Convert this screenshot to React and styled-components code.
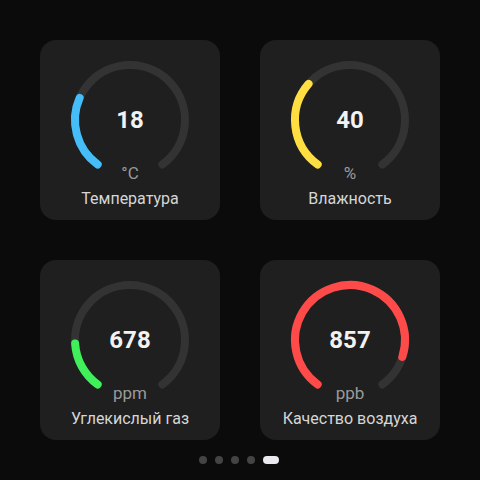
import React from "react";
import styled, { createGlobalStyle } from "styled-components";

const Global = createGlobalStyle`
  html, body { margin: 0; padding: 0; background: #0b0b0b; }
  body { width: 480px; height: 480px; overflow: hidden; font-family: Roboto, "Noto Sans", sans-serif; }
`;

const Page = styled.div`
  width: 480px;
  height: 480px;
  box-sizing: border-box;
  padding-top: 40px;
  display: flex;
  flex-direction: column;
  align-items: center;
`;

const Grid = styled.div`
  display: grid;
  grid-template-columns: 180px 180px;
  grid-auto-rows: 180px;
  gap: 40px;
`;

const Card = styled.div`
  position: relative;
  background: #1f1f1f;
  border-radius: 16px;
  display: flex;
  flex-direction: column;
  align-items: center;
  padding-top: 66px;
  box-sizing: border-box;
`;

const GaugeSvg = styled.svg`
  position: absolute;
  left: 0;
  top: 0;
  width: 180px;
  height: 180px;
`;

const Value = styled.div`
  position: relative;
  font-size: 24px;
  line-height: 28px;
  font-weight: 700;
  color: #f2f2f2;
`;

const Unit = styled.div`
  position: relative;
  margin-top: 29px;
  font-size: 17px;
  line-height: 20px;
  color: #9a9a9a;
`;

const Label = styled.div`
  position: relative;
  margin-top: 6px;
  font-size: 16px;
  line-height: 20px;
  color: #d6d6d6;
`;

const Dots = styled.div`
  margin-top: 16px;
  display: flex;
  gap: 8px;
  margin-left: -2px;
`;

const Dot = styled.div`
  width: ${(p) => (p.$active ? 16 : 8)}px;
  height: 8px;
  border-radius: 4px;
  background: ${(p) => (p.$active ? "#e9e9ef" : "#444444")};
`;

const CX = 90;
const CY = 80;
const R = 55;
const START = 36;
const SPAN = 288;

function pt(t) {
  const a = (t * Math.PI) / 180;
  return [CX - R * Math.sin(a), CY + R * Math.cos(a)];
}

function arc(t0, t1) {
  const [x0, y0] = pt(t0);
  const [x1, y1] = pt(t1);
  const large = t1 - t0 > 180 ? 1 : 0;
  return `M ${x0.toFixed(2)} ${y0.toFixed(2)} A ${R} ${R} 0 ${large} 1 ${x1.toFixed(2)} ${y1.toFixed(2)}`;
}

function Gauge({ frac, color }) {
  return (
    <GaugeSvg viewBox="0 0 180 180">
      <path d={arc(START, START + SPAN)} fill="none" stroke="#333333" strokeWidth="8" strokeLinecap="round" />
      <path d={arc(START, START + SPAN * frac)} fill="none" stroke={color} strokeWidth="8" strokeLinecap="round" />
    </GaugeSvg>
  );
}

const data = [
  { value: "18", unit: "°C", label: "Температура", frac: 0.27, color: "#45bdf9" },
  { value: "40", unit: "%", label: "Влажность", frac: 0.33, color: "#ffde42" },
  { value: "678", unit: "ppm", label: "Углекислый газ", frac: 0.175, color: "#40f05a" },
  { value: "857", unit: "ppb", label: "Качество воздуха", frac: 0.875, color: "#ff4a4a" },
];

export default function App() {
  return (
    <Page>
      <Global />
      <Grid>
        {data.map((d) => (
          <Card key={d.label}>
            <Gauge frac={d.frac} color={d.color} />
            <Value>{d.value}</Value>
            <Unit>{d.unit}</Unit>
            <Label>{d.label}</Label>
          </Card>
        ))}
      </Grid>
      <Dots>
        <Dot />
        <Dot />
        <Dot />
        <Dot />
        <Dot $active />
      </Dots>
    </Page>
  );
}
